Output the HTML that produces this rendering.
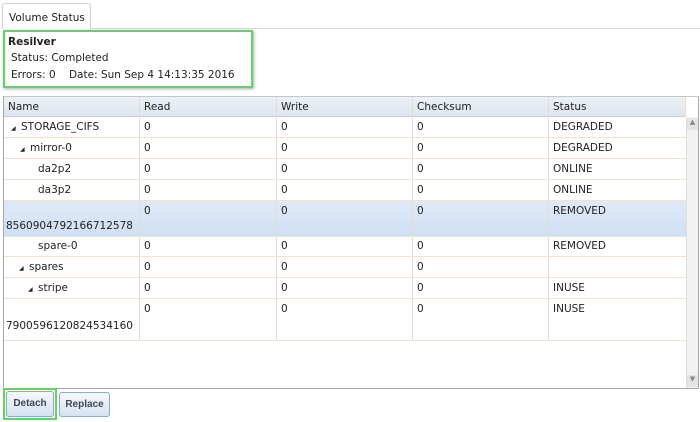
<!DOCTYPE html>
<html><head><style>
*{margin:0;padding:0;box-sizing:border-box}
body{width:700px;height:422px;background:#fff;font-family:"DejaVu Sans","Liberation Sans",sans-serif;font-size:10.5px;color:#222;position:relative;overflow:hidden}
.abs{position:absolute}
.tab{left:2px;top:3px;width:89px;height:26px;border:1px solid #c8d3de;border-bottom:none;background:#fff;padding:8px 0 0 6px;border-radius:3px 3px 0 0}
.tabline{left:90px;top:28px;width:610px;height:1px;background:#d0d8e0}
.gbox{left:3px;top:30px;width:250px;height:58px;border:2px solid #5cd65c;box-shadow:1px 1px 3px #aaa}
.tbl{left:3px;top:96px;width:696px;height:293px;border:1px solid #a8a8a8;border-top:1px solid #c0c8d0}
.hdr{left:4px;top:97px;width:682px;height:20px;background:linear-gradient(#eef2f7,#dde5ee);border-bottom:1px solid #c5cfd9}
.cell{position:absolute;white-space:nowrap}
.vl{position:absolute;width:1px;background:#eadccd}
.hl{position:absolute;left:4px;width:682px;height:1px;background:#efe2d4}
.sb{left:686px;top:117px;width:12px;height:271px;background:#f2f2f2;border-left:1px solid #ddd}
.btn{border:1px solid #8fa9c4;border-radius:3px;background:linear-gradient(#f4f8fc,#d5e3f1);font-family:"Liberation Sans",sans-serif;font-size:10px;font-weight:bold;color:#445;text-align:center}
.tri{font-size:6px;display:inline-block;width:10px}
</style></head><body>
<div class="abs tab">Volume Status</div>
<div class="abs tabline"></div>
<div class="abs gbox"></div>
<div class="abs" style="left:8px;top:36px;font-weight:bold">Resilver</div>
<div class="abs" style="left:11px;top:52px">Status: Completed</div>
<div class="abs" style="left:11px;top:69px">Errors: 0&nbsp;&nbsp;&nbsp;&nbsp;Date: Sun Sep 4 14:13:35 2016</div>

<div class="abs tbl"></div>
<div class="abs hdr"></div>
<div class="abs" style="left:4px;top:200px;width:682px;height:36px;background:linear-gradient(#dfeaf7,#cfe0f3)"></div>
<div class="abs sb"></div>
<div class="abs" style="left:687px;top:118px;width:11px;height:12px;background:#e4e4e4;font-size:7px;color:#888;text-align:center">▲</div>
<div class="abs" style="left:687px;top:375px;width:11px;height:12px;background:#e4e4e4;font-size:7px;color:#888;text-align:center">▼</div>

<div class="vl" style="left:139px;top:97px;height:243px"></div>
<div class="vl" style="left:276px;top:97px;height:243px"></div>
<div class="vl" style="left:412px;top:97px;height:243px"></div>
<div class="vl" style="left:548px;top:97px;height:243px"></div>
<div class="vl" style="left:685px;top:97px;height:20px"></div>

<div class="hl" style="top:137px"></div>
<div class="hl" style="top:158px"></div>
<div class="hl" style="top:179px"></div>
<div class="hl" style="top:200px"></div>
<div class="hl" style="top:236px"></div>
<div class="hl" style="top:256px"></div>
<div class="hl" style="top:277px"></div>
<div class="hl" style="top:298px"></div>
<div class="hl" style="top:340px"></div>

<div class="cell" style="left:8px;top:101px">Name</div>
<div class="cell" style="left:144px;top:101px">Read</div>
<div class="cell" style="left:281px;top:101px">Write</div>
<div class="cell" style="left:417px;top:101px">Checksum</div>
<div class="cell" style="left:553px;top:101px">Status</div>

<div class="cell" style="left:11px;top:121px"><span class="tri">◢</span>STORAGE_CIFS</div>
<div class="cell" style="left:20px;top:142px"><span class="tri">◢</span>mirror-0</div>
<div class="cell" style="left:38px;top:163px">da2p2</div>
<div class="cell" style="left:38px;top:184px">da3p2</div>
<div class="cell" style="left:6px;top:220px">8560904792166712578</div>
<div class="cell" style="left:38px;top:240px">spare-0</div>
<div class="cell" style="left:19px;top:261px"><span class="tri">◢</span>spares</div>
<div class="cell" style="left:28px;top:282px"><span class="tri">◢</span>stripe</div>
<div class="cell" style="left:6px;top:320px">7900596120824534160</div>

<div id="nums"></div>
<script>
var rows=[[121,'DEGRADED'],[142,'DEGRADED'],[163,'ONLINE'],[184,'ONLINE'],[205,'REMOVED'],[240,'REMOVED'],[261,''],[282,'INUSE'],[303,'INUSE']];
var h='';rows.forEach(function(r){[144,281,417].forEach(function(x){h+='<div class="cell" style="left:'+x+'px;top:'+r[0]+'px">0</div>'});h+='<div class="cell" style="left:553px;top:'+r[0]+'px">'+r[1]+'</div>'});
document.getElementById('nums').innerHTML=h;
</script>

<div class="abs" style="left:3px;top:388px;width:54px;height:32px;border:2px solid #5cd65c"></div>
<div class="abs btn" style="left:6px;top:391px;width:48px;height:26px;line-height:24px">Detach</div>
<div class="abs btn" style="left:59px;top:392px;width:51px;height:25px;line-height:23px">Replace</div>
</body></html>
